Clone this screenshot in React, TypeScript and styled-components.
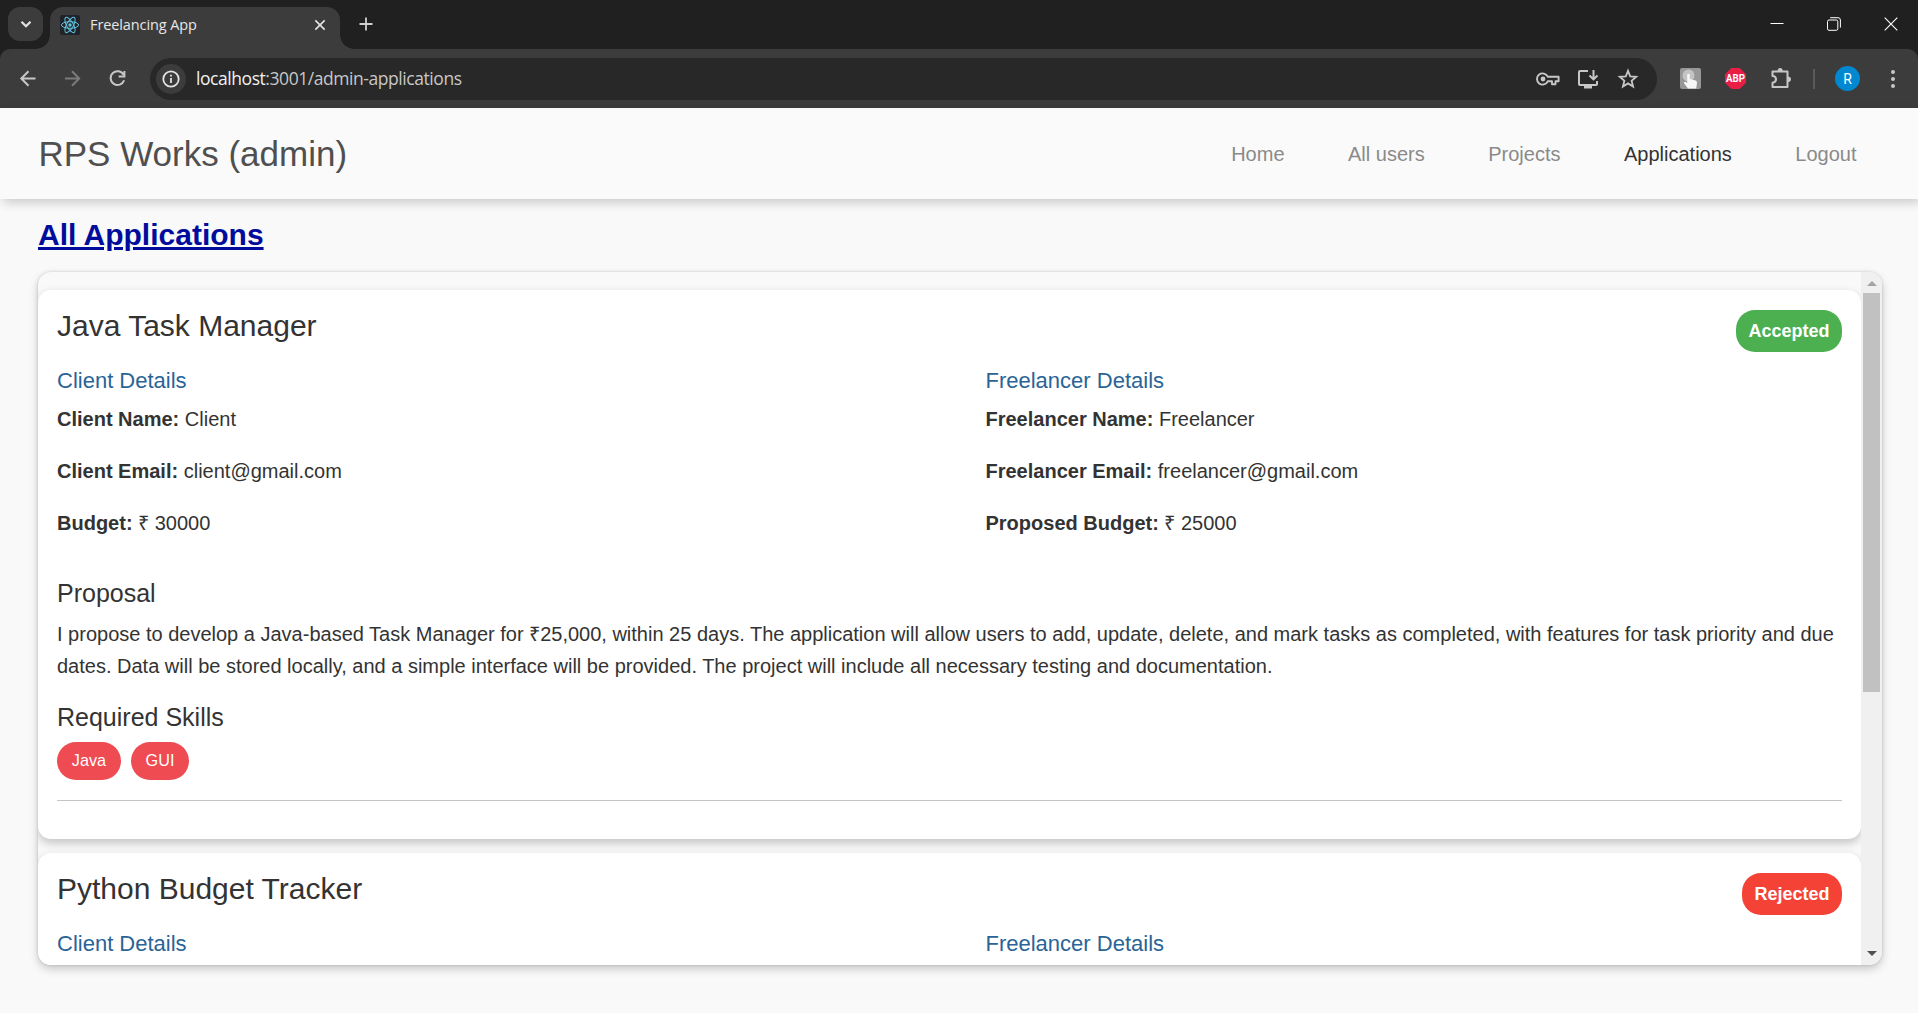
import React from "react";
import styled, { createGlobalStyle } from "styled-components";

const GlobalStyle = createGlobalStyle`
  * { box-sizing: border-box; }
  body {
    margin: 0;
    background: #f9f9f9;
    color: #333;
    font-family: "Liberation Sans", Arial, sans-serif;
    overflow: hidden;
  }
  h1, h2, h3, h4, p { margin: 0; font-weight: 400; }
  svg { display: block; flex: none; }
`;

const Page = styled.div`
  display: flex;
  flex-direction: column;
  width: 1918px;
  height: 1013px;
  overflow: hidden;
`;

/* ---------- browser frame ---------- */

const TabStrip = styled.div`
  display: flex;
  align-items: flex-start;
  height: 49px;
  padding: 7px 20px 0 8px;
  background: #202020;
  flex: none;
`;

const TabSearch = styled.div`
  display: grid;
  place-items: center;
  width: 35px;
  height: 34px;
  border-radius: 12px;
  background: #3c3c3c;
`;

const Tab = styled.div`
  position: relative;
  display: flex;
  align-items: center;
  width: 290px;
  height: 42px;
  margin-left: 7px;
  padding: 0 13px 7px 10px;
  border-radius: 13px 13px 0 0;
  background: #3c3c3c;

  &::before,
  &::after {
    content: "";
    position: absolute;
    bottom: 0;
    width: 14px;
    height: 14px;
  }
  &::before {
    left: -14px;
    background: radial-gradient(circle at 0 0, transparent 13.5px, #3c3c3c 14px);
  }
  &::after {
    right: -14px;
    background: radial-gradient(circle at 100% 0, transparent 13.5px, #3c3c3c 14px);
  }
`;

const TabTitle = styled.span`
  flex: 1;
  margin-left: 10px;
  color: #e6e6e6;
  font: 14.5px/20px "Open Sans", "Noto Sans", sans-serif;
  letter-spacing: -0.1px;
  white-space: nowrap;
`;

const NewTab = styled.div`
  margin: 10px 0 0 19px;
`;

const WindowControls = styled.div`
  display: flex;
  gap: 43px;
  margin: 10px 0 0 auto;
`;

const ToolbarBack = styled.div`
  flex: none;
  background: #202020;
`;

const Toolbar = styled.div`
  display: flex;
  align-items: center;
  height: 59px;
  padding: 0 15px 0 16px;
  border-radius: 10px 10px 0 0;
  background: #3c3c3c;
`;

const NavButtons = styled.div`
  display: flex;
  gap: 20.5px;
`;

const AddressBar = styled.div`
  display: flex;
  align-items: center;
  width: 1507px;
  height: 42px;
  margin-left: 21px;
  padding: 0 17px 0 6px;
  border-radius: 21px;
  background: #282828;
`;

const SiteInfo = styled.div`
  display: grid;
  place-items: center;
  width: 30px;
  height: 30px;
  border-radius: 50%;
  background: #3c3c3c;
`;

const Url = styled.span`
  flex: 1;
  margin: -2px 0 0 10px;
  color: #c7c7c7;
  font: 17.5px/24px "Open Sans", "Noto Sans", sans-serif;
  letter-spacing: -0.44px;
`;

const UrlHost = styled.span`
  color: #f1f1f1;
`;

const AddressActions = styled.div`
  display: flex;
  gap: 16px;
`;

const Extensions = styled.div`
  display: flex;
  align-items: center;
  margin-left: 23px;
`;

const ExtensionSlot = styled.div<{ $gap?: number }>`
  margin-left: ${(p) => p.$gap ?? 23}px;
`;

const Divider = styled.div`
  width: 2px;
  height: 20px;
  margin-left: 20px;
  background: #5a5a5a;
`;

const Avatar = styled.div`
  display: grid;
  place-items: center;
  width: 25px;
  height: 25px;
  margin-left: 20px;
  border-radius: 50%;
  background: #0288d1;
  color: #fff;
  font: 14px/1 Roboto, sans-serif;
`;

/* ---------- application ---------- */

const Navbar = styled.header`
  position: relative;
  display: flex;
  align-items: center;
  justify-content: space-between;
  flex: none;
  height: 91px;
  padding: 0 61.5px 0 38.5px;
  background: #fafafa;
  box-shadow: 3px 4px 10px rgba(0, 0, 0, 0.18);
`;

const Brand = styled.h3`
  color: #4f4f4f;
  font-size: 35px;
  line-height: 42px;
`;

const NavLinks = styled.nav`
  display: flex;
  gap: 63.5px;
`;

const NavLink = styled.span<{ $active?: boolean }>`
  color: ${(p) => (p.$active ? "#333" : "#8a8a8a")};
  font-size: 20px;
  line-height: 30px;
`;

const Main = styled.main`
  padding: 18px 36px 0 38px;
  background: #f9f9f9;
`;

const Heading = styled.h1`
  width: max-content;
  color: #000c9c;
  font-size: 30px;
  font-weight: 700;
  line-height: 36px;
  text-decoration: underline;
`;

const ListPanel = styled.section`
  display: flex;
  width: 1844px;
  height: 693px;
  margin-top: 19px;
  border-radius: 13px;
  overflow: hidden;
  background: #f9f9f9;
  box-shadow: 0 4px 10px rgba(0, 0, 0, 0.2), 0 0 3px rgba(0, 0, 0, 0.16);
`;

const CardList = styled.div`
  display: flex;
  flex-direction: column;
  flex: 1;
  gap: 14px;
  padding-top: 18px;
  overflow: hidden;
`;

const Card = styled.article`
  flex: none;
  height: 549px;
  padding: 18px 19px 0;
  border-radius: 13px;
  background: #fff;
  box-shadow: 0 4px 10px rgba(0, 0, 0, 0.22);
`;

const CardHeader = styled.div`
  display: flex;
  align-items: flex-start;
  justify-content: space-between;
  height: 59px;
`;

const CardTitle = styled.h2`
  font-size: 30px;
  line-height: 36px;
`;

const Status = styled.span<{ $rejected?: boolean }>`
  margin-top: 2px;
  padding: 0 12.5px;
  border-radius: 19px;
  background: ${(p) => (p.$rejected ? "#f44336" : "#4caf50")};
  color: #fff;
  font-size: 18px;
  font-weight: 700;
  line-height: 42px;
`;

const Details = styled.div`
  display: grid;
  grid-template-columns: 1fr 1fr;
  column-gap: 72px;
`;

const Person = styled.div`
  display: flex;
  flex-direction: column;
`;

const PersonTitle = styled.h4`
  margin-bottom: 10px;
  color: #2a6496;
  font-size: 22px;
  line-height: 27px;
`;

const Field = styled.p`
  margin-bottom: 22px;
  font-size: 20px;
  line-height: 30px;
`;

const SectionTitle = styled.h4`
  font-size: 25px;
  line-height: 30px;
`;

const Proposal = styled.div`
  margin-top: 18px;
`;

const ProposalText = styled.p`
  margin: 10px -4px 20px 0;
  font-size: 20px;
  line-height: 32px;
`;

const Skills = styled.div`
  display: flex;
  gap: 10px;
  margin-top: 10px;
`;

const Skill = styled.span`
  padding: 0 14.8px 1px;
  border-radius: 19px;
  background: #ef4b52;
  color: #fff;
  font-size: 16.2px;
  line-height: 37px;
`;

const Rule = styled.hr`
  height: 1px;
  margin: 20px 0 0;
  border: 0;
  background: #c4c4c4;
`;

const ScrollTrack = styled.div`
  display: flex;
  flex-direction: column;
  align-items: center;
  width: 21px;
  background: #f0f0f0;
`;

const ScrollArrow = styled.div<{ $down?: boolean }>`
  display: grid;
  place-items: center;
  width: 21px;
  height: 21px;
  padding: ${(p) => (p.$down ? "0 0 2px" : "2px 0 0")};
`;

const ScrollThumb = styled.div`
  width: 17px;
  height: 399px;
  margin-bottom: auto;
  background: #c1c1c1;
`;

/* ---------- icons ---------- */

type StrokeProps = { size: number; color?: string; width?: number; children: React.ReactNode };

const Stroke = ({ size, color = "#c7c7c7", width = 2, children }: StrokeProps) => (
  <svg width={size} height={size} viewBox="0 0 24 24" fill="none" stroke={color} strokeWidth={width}>
    {children}
  </svg>
);

const ReactLogo = () => (
  <svg width="20" height="20" viewBox="0 0 20 20" fill="none" stroke="#61c4de" strokeWidth="1">
    <rect width="20" height="20" rx="2" fill="#20232a" stroke="none" />
    <ellipse cx="10" cy="10" rx="8.6" ry="3.3" />
    <ellipse cx="10" cy="10" rx="8.6" ry="3.3" transform="rotate(60 10 10)" />
    <ellipse cx="10" cy="10" rx="8.6" ry="3.3" transform="rotate(120 10 10)" />
    <circle cx="10" cy="10" r="1.7" fill="#61c4de" stroke="none" />
  </svg>
);

const KeyIcon = () => (
  <svg width="24" height="24" viewBox="0 0 24 24" fill="none" stroke="#c7c7c7" strokeWidth="1.9">
    <path d="M11.7 9.7 A5.6 5.6 0 1 0 11.7 14.3 H16 V17.3 H19.5 V14.3 H22.6 V9.7 Z" strokeLinejoin="round" />
    <circle cx="7" cy="12" r="2.4" fill="#c7c7c7" stroke="none" />
  </svg>
);

const InstallIcon = () => (
  <svg width="24" height="24" viewBox="0 0 24 24" fill="none" stroke="#c7c7c7" strokeWidth="2">
    <path d="M12 4 H4 Q3 4 3 5 V17 Q3 18 4 18 H20 Q21 18 21 17 V14" />
    <path d="M8 20 H16" strokeWidth="3" />
    <path d="M17.5 3 V12 M13.5 8.5 L17.5 12.4 L21.5 8.5" />
  </svg>
);

const StarIcon = () => (
  <svg width="24" height="24" viewBox="0 0 24 24" fill="none" stroke="#c7c7c7" strokeWidth="1.8">
    <path d="M12 3.8 L14.2 9.4 L20.2 9.8 L15.6 13.7 L17.1 19.6 L12 16.4 L6.9 19.6 L8.4 13.7 L3.8 9.8 L9.8 9.4 Z" />
  </svg>
);

const HandIcon = () => (
  <svg width="21" height="21" viewBox="0 0 21 21">
    <rect width="21" height="21" rx="2" fill="#989898" />
    <circle cx="8.5" cy="7.5" r="6" fill="#c4c4c4" />
    <path
      d="M7.2 6.5 Q8.5 5 9.8 6.5 V11 L15 12.2 Q17.4 12.8 17 15 L16.2 20.4 H8 L4 15.3 Q3.6 13.8 5.2 13.8 L7.2 15 Z"
      fill="#f7f7f7"
    />
  </svg>
);

const AbpIcon = () => (
  <svg width="21" height="21" viewBox="0 0 21 21">
    <path d="M6.3 0 H14.7 L21 6.3 V14.7 L14.7 21 H6.3 L0 14.7 V6.3 Z" fill="#e91e45" />
    <text
      x="10.5"
      y="14.4"
      fill="#fff"
      fontFamily="Roboto, sans-serif"
      fontSize="10.5"
      fontWeight="700"
      textAnchor="middle"
      textLength="19"
      lengthAdjust="spacingAndGlyphs"
    >
      ABP
    </text>
  </svg>
);

const PuzzleIcon = () => (
  <svg width="24" height="24" viewBox="0 0 24 24" fill="none" stroke="#c7c7c7" strokeWidth="2">
    <path d="M3.5 4.5 H18.5 V20 H3.5 V15.8 Q7 15.3 7 12.3 Q7 9.3 3.5 9.1 Z" strokeLinejoin="round" />
    <path d="M8.6 4.5 Q8.6 1 11.2 1 Q13.8 1 13.8 4.5 Z M18.5 9.4 Q22 9.4 22 12.2 Q22 15 18.5 15 Z" fill="#c7c7c7" stroke="none" />
  </svg>
);

const MenuDots = () => (
  <svg width="6" height="20" viewBox="0 0 6 20" fill="#c7c7c7">
    <circle cx="3" cy="3" r="2" />
    <circle cx="3" cy="10" r="2" />
    <circle cx="3" cy="17" r="2" />
  </svg>
);

const Triangle = ({ down, color }: { down?: boolean; color: string }) => (
  <svg width="10" height="5" viewBox="0 0 10 5" fill={color}>
    <path d={down ? "M0 0 H10 L5 5 Z" : "M0 5 H10 L5 0 Z"} />
  </svg>
);

/* ---------- data ---------- */

type DetailField = { label: string; value: string };

type Application = {
  title: string;
  rejected?: boolean;
  client: DetailField[];
  freelancer: DetailField[];
  proposal?: string;
  skills?: string[];
};

const applications: Application[] = [
  {
    title: "Java Task Manager",
    client: [
      { label: "Client Name:", value: "Client" },
      { label: "Client Email:", value: "client@gmail.com" },
      { label: "Budget:", value: "₹ 30000" },
    ],
    freelancer: [
      { label: "Freelancer Name:", value: "Freelancer" },
      { label: "Freelancer Email:", value: "freelancer@gmail.com" },
      { label: "Proposed Budget:", value: "₹ 25000" },
    ],
    proposal:
      "I propose to develop a Java-based Task Manager for ₹25,000, within 25 days. The application will allow users to add, update, delete, and mark tasks as completed, with features for task priority and due dates. Data will be stored locally, and a simple interface will be provided. The project will include all necessary testing and documentation.",
    skills: ["Java", "GUI"],
  },
  { title: "Python Budget Tracker", rejected: true, client: [], freelancer: [] },
];

const PersonDetails = ({ title, fields }: { title: string; fields: DetailField[] }) => (
  <Person>
    <PersonTitle>{title}</PersonTitle>
    {fields.map((f) => (
      <Field key={f.label}>
        <b>{f.label}</b> {f.value}
      </Field>
    ))}
  </Person>
);

const ApplicationCard = ({ app }: { app: Application }) => (
  <Card>
    <CardHeader>
      <CardTitle>{app.title}</CardTitle>
      <Status $rejected={app.rejected}>{app.rejected ? "Rejected" : "Accepted"}</Status>
    </CardHeader>
    <Details>
      <PersonDetails title="Client Details" fields={app.client} />
      <PersonDetails title="Freelancer Details" fields={app.freelancer} />
    </Details>
    {app.proposal && (
      <Proposal>
        <SectionTitle>Proposal</SectionTitle>
        <ProposalText>{app.proposal}</ProposalText>
      </Proposal>
    )}
    {app.skills && (
      <>
        <SectionTitle>Required Skills</SectionTitle>
        <Skills>
          {app.skills.map((s) => (
            <Skill key={s}>{s}</Skill>
          ))}
        </Skills>
        <Rule />
      </>
    )}
  </Card>
);

const links = ["Home", "All users", "Projects", "Applications", "Logout"];

export default function App() {
  return (
    <Page>
      <GlobalStyle />
      <TabStrip>
        <TabSearch>
          <Stroke size={18} color="#e3e3e3" width={3}>
            <path d="M6 9 L12 15 L18 9" />
          </Stroke>
        </TabSearch>
        <Tab>
          <ReactLogo />
          <TabTitle>Freelancing App</TabTitle>
          <Stroke size={14} color="#e3e3e3" width={2.8}>
            <path d="M4 4 L20 20 M20 4 L4 20" />
          </Stroke>
        </Tab>
        <NewTab>
          <svg width="14" height="14" viewBox="0 0 14 14" stroke="#d0d0d0" strokeWidth="1.8">
            <path d="M7 0.5 V13.5 M0.5 7 H13.5" />
          </svg>
        </NewTab>
        <WindowControls>
          <svg width="14" height="14" viewBox="0 0 14 14" stroke="#fff">
            <path d="M0.5 6.5 H13.5" />
          </svg>
          <svg width="14" height="14" viewBox="0 0 14 14" fill="none" stroke="#fff">
            <rect x="0.5" y="3" width="10.3" height="10.3" rx="1.5" />
            <path d="M3.2 0.7 H11 Q13.4 0.7 13.4 3 V10.6" />
          </svg>
          <svg width="14" height="14" viewBox="0 0 14 14" stroke="#fff" strokeWidth="1.1">
            <path d="M0.7 0.7 L13.3 13.3 M13.3 0.7 L0.7 13.3" />
          </svg>
        </WindowControls>
      </TabStrip>
      <ToolbarBack>
        <Toolbar>
          <NavButtons>
            <Stroke size={24}>
              <path d="M19.5 11.5 H5.5 M12.5 4.3 L5.3 11.5 L12.5 18.7" />
            </Stroke>
            <Stroke size={24} color="#7b7b7b">
              <path d="M4 11.5 H18 M11 4.3 L18.2 11.5 L11 18.7" />
            </Stroke>
            <Stroke size={24}>
              <path d="M18.6 7.8 A6.9 6.9 0 1 0 19.1 13.3 M19.4 3.9 V9.5 H13.6" />
            </Stroke>
          </NavButtons>
          <AddressBar>
            <SiteInfo>
              <svg width="18" height="18" viewBox="0 0 18 18" fill="none" stroke="#e3e3e3" strokeWidth="1.8">
                <circle cx="9" cy="9" r="7.7" />
                <path d="M9 8 V13 M9 4.8 V6.6" />
              </svg>
            </SiteInfo>
            <Url>
              <UrlHost>localhost</UrlHost>:3001/admin-applications
            </Url>
            <AddressActions>
              <KeyIcon />
              <InstallIcon />
              <StarIcon />
            </AddressActions>
          </AddressBar>
          <Extensions>
            <HandIcon />
            <ExtensionSlot $gap={24}>
              <AbpIcon />
            </ExtensionSlot>
            <ExtensionSlot>
              <PuzzleIcon />
            </ExtensionSlot>
            <Divider />
            <Avatar>R</Avatar>
            <ExtensionSlot $gap={30}>
              <MenuDots />
            </ExtensionSlot>
          </Extensions>
        </Toolbar>
      </ToolbarBack>
      <Navbar>
        <Brand>RPS Works (admin)</Brand>
        <NavLinks>
          {links.map((l) => (
            <NavLink key={l} $active={l === "Applications"}>
              {l}
            </NavLink>
          ))}
        </NavLinks>
      </Navbar>
      <Main>
        <Heading>All Applications</Heading>
        <ListPanel>
          <CardList>
            {applications.map((a) => (
              <ApplicationCard key={a.title} app={a} />
            ))}
          </CardList>
          <ScrollTrack>
            <ScrollArrow>
              <Triangle color="#a3a3a3" />
            </ScrollArrow>
            <ScrollThumb />
            <ScrollArrow $down>
              <Triangle down color="#505050" />
            </ScrollArrow>
          </ScrollTrack>
        </ListPanel>
      </Main>
    </Page>
  );
}
